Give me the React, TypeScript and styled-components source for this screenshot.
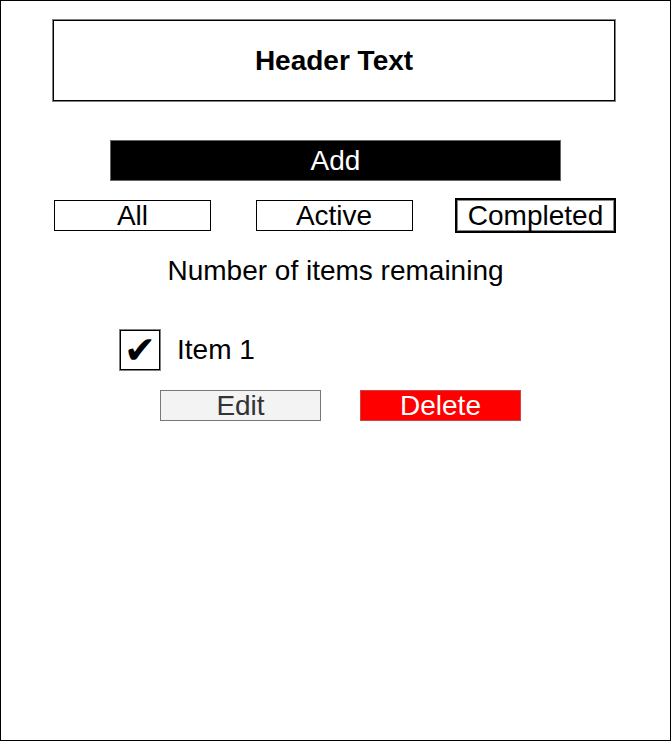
import React from "react";
import styled, { createGlobalStyle } from "styled-components";

const GlobalStyle = createGlobalStyle`
  html, body {
    margin: 0;
    padding: 0;
    background: #fff;
  }
  body {
    font-family: "Liberation Sans", Helvetica, Arial, sans-serif;
  }
`;

const Page = styled.div`
  box-sizing: border-box;
  width: 671px;
  height: 741px;
  border: 1px solid #000;
  display: flex;
  flex-direction: column;
  align-items: flex-start;
  font-size: 28px;
  color: #000;
`;

const Header = styled.header`
  box-sizing: border-box;
  margin: 18px 0 0 51px;
  width: 564px;
  height: 83px;
  border: 1px solid #808080;
  box-shadow: inset 0 0 0 1px #000;
  display: flex;
  align-items: center;
  justify-content: center;
  font-weight: bold;
  font-size: 28px;
`;

const AddButton = styled.button`
  box-sizing: border-box;
  align-self: center;
  margin-top: 38px;
  width: 451px;
  height: 41px;
  background: #000;
  color: #fff;
  border: 1px solid #666;
  font-family: inherit;
  font-size: 28px;
  padding: 0;
  line-height: 39px;
`;

const FilterRow = styled.div`
  margin: 19px 0 0 53px;
  width: 560px;
  display: flex;
  justify-content: space-between;
`;

const FilterButton = styled.button<{ $selected?: boolean }>`
  box-sizing: border-box;
  width: 157px;
  height: 31px;
  background: #fff;
  color: #000;
  border: 1px solid ${(p) => (p.$selected ? "#888" : "#000")};
  outline: ${(p) => (p.$selected ? "2px solid #000" : "none")};
  font-family: inherit;
  font-size: 28px;
  padding: 0;
  line-height: 29px;
`;

const Remaining = styled.p`
  margin: 24px 0 0 0;
  width: 100%;
  text-align: center;
  line-height: 32px;
`;

const ItemRow = styled.div`
  margin: 42px 0 0 118px;
  display: flex;
  align-items: center;
  gap: 16px;
  line-height: 32px;
`;

const CheckBox = styled.span`
  box-sizing: border-box;
  width: 42px;
  height: 42px;
  border: 1px solid #808080;
  box-shadow: inset 0 0 0 1px #000;
  display: flex;
  align-items: center;
  justify-content: center;
  font-family: "DejaVu Sans", sans-serif;
  font-size: 38px;
  line-height: 1;
  overflow: hidden;
`;

const ActionRow = styled.div`
  margin: 19px 0 0 159px;
  display: flex;
  gap: 39px;
`;

const ActionButton = styled.button<{ $danger?: boolean }>`
  box-sizing: border-box;
  width: 161px;
  height: 31px;
  background: ${(p) => (p.$danger ? "#ff0000" : "#f3f3f3")};
  color: ${(p) => (p.$danger ? "#fff" : "#333")};
  border: 1px solid ${(p) => (p.$danger ? "#c44" : "#777")};
  font-family: inherit;
  font-size: 28px;
  padding: 0;
  line-height: 29px;
`;

export default function App() {
  return (
    <>
      <GlobalStyle />
      <Page>
        <Header>Header Text</Header>
        <AddButton>Add</AddButton>
        <FilterRow>
          <FilterButton>All</FilterButton>
          <FilterButton>Active</FilterButton>
          <FilterButton $selected>Completed</FilterButton>
        </FilterRow>
        <Remaining>Number of items remaining</Remaining>
        <ItemRow>
          <CheckBox>✔</CheckBox>
          <span>Item 1</span>
        </ItemRow>
        <ActionRow>
          <ActionButton>Edit</ActionButton>
          <ActionButton $danger>Delete</ActionButton>
        </ActionRow>
      </Page>
    </>
  );
}
